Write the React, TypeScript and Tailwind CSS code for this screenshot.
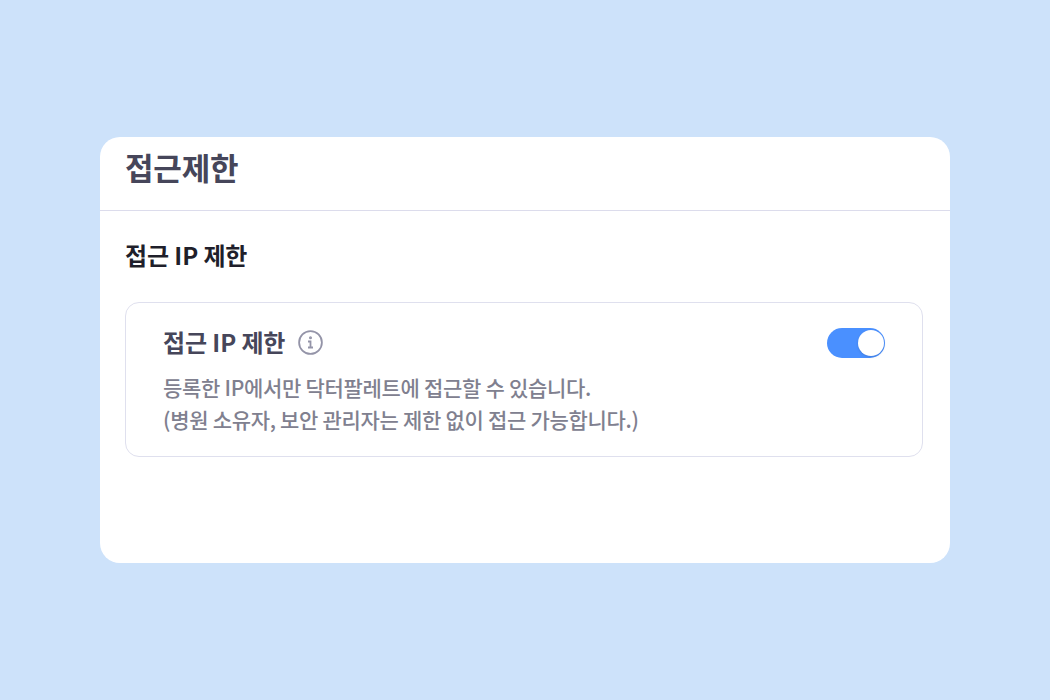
export default function App() {
  return (
    <main
      className="w-[1050px] h-[700px] bg-[#cde2fa] flex items-center justify-center"
      style={{ fontFamily: '"Noto Sans CJK KR", "Noto Sans", sans-serif' }}
    >
      <div className="w-[850px] h-[426px] bg-white rounded-[20px] overflow-hidden">
        <div className="h-[74px] px-[25px] border-b border-[#dcdcec]">
          <h1 className="text-[31px] leading-[60px] font-bold tracking-[-0.2px] text-[#46465a]">접근제한</h1>
        </div>
        <div className="px-[25px] pt-[26px]">
          <h2 className="text-[24px] leading-[36px] font-bold tracking-[-0.1px] text-[#1f1f2b]">접근 IP 제한</h2>
          <div className="mt-[29px] w-[798px] h-[155px] rounded-[14px] border border-[#dfe0ee] pl-[37px] pr-[37px] pt-[21px] flex justify-between">
            <div>
              <div className="flex items-center gap-[13px]">
                <span className="text-[24px] leading-[36px] font-bold tracking-[-0.1px] text-[#46465a]">접근 IP 제한</span>
                <svg width="25" height="25" viewBox="0 0 25 25" fill="none" stroke="#9494a8" strokeWidth="1.8">
                  <circle cx="12.5" cy="12.5" r="11.4" />
                  <circle cx="12.5" cy="7.8" r="0.6" fill="#9494a8" />
                  <path d="M10 11.5h2.5v6M10 17.5h5" />
                </svg>
              </div>
              <p className="mt-[11px] text-[21px] leading-[32px] font-medium tracking-[-0.3px] text-[#80808f]">
                등록한 IP에서만 닥터팔레트에 접근할 수 있습니다.
                <br />
                (병원 소유자, 보안 관리자는 제한 없이 접근 가능합니다.)
              </p>
            </div>
            <div className="mt-[4px] w-[58px] h-[30px] rounded-full bg-[#4a90ff] flex items-center justify-end pr-[1px]">
              <div className="w-[26px] h-[26px] rounded-full bg-white shadow-sm" />
            </div>
          </div>
        </div>
      </div>
    </main>
  );
}
